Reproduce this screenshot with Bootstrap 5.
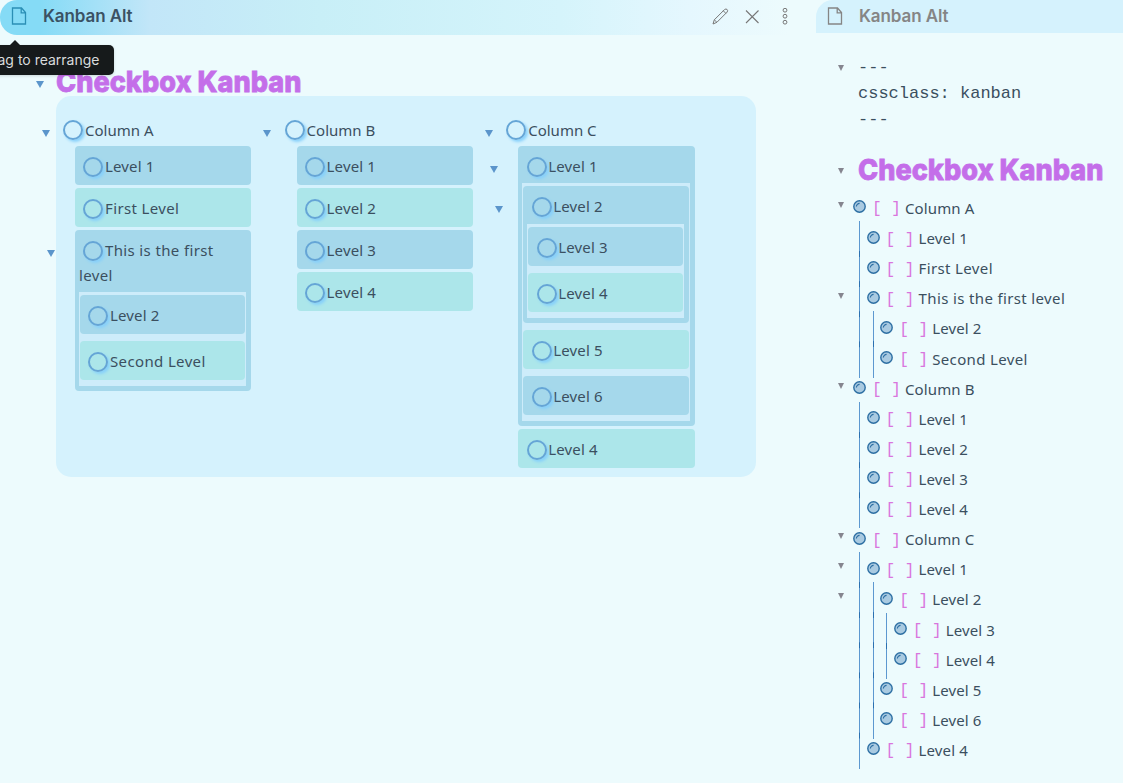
<!DOCTYPE html>
<html lang="en">
<head>
<meta charset="utf-8">
<meta name="viewport" content="width=device-width, initial-scale=1">
<title>Kanban Alt</title>
<link href="https://cdn.jsdelivr.net/npm/bootstrap@5.3.0/dist/css/bootstrap.min.css" rel="stylesheet">
<style>
  body { background: #edfbfd; color: #3b4f5f; font: 15px/25px "Noto Sans", sans-serif; height: 783px; overflow: hidden; }
  ul { list-style: none; margin: 0; padding: 0; }
  .pane-left { width: 816px; }
  .pane-head { height: 35px; font: 600 17px/33px Inter, sans-serif; letter-spacing: -.1px; }
  .head-active { background: linear-gradient(90deg, #85dbf6 0, #85dbf6 40px, #c2e6f8 150px, #c8eff7 320px, #d5f4fb 560px, #e5f7fe 690px, #edfbfd 790px); border-radius: 17px 0 0 17px; color: #3a5264; padding-left: 11px; }
  .head-idle { background: #d5f2fd; border-top-left-radius: 17px; height: 33px; color: #858585; padding-left: 11px; }
  .pane-head svg { fill: none; stroke: currentColor; flex: none; display: block; }
  .file-ico { margin: 7px 16px 0 0; }
  .tools { color: #777; margin-right: 23px; gap: 16px; }
  .tip { position: absolute; top: 45px; left: -30px; width: 143.5px; height: 30px; padding-right: 14px; background: #161a1b; color: #d9dcdd; border-radius: 5px; font: 14px/30px Inter, sans-serif; text-align: right; white-space: nowrap; z-index: 5; box-shadow: 0 1px 3px rgba(0,0,0,.15); }
  .tip::before { content: ""; position: absolute; left: 40px; top: -5px; border: 5px solid transparent; border-top: 0; border-bottom-color: #161a1b; }
  .title { font: 800 29px/36px Inter, sans-serif; color: #c46ee9; -webkit-text-stroke: .8px #c46ee9; white-space: nowrap; margin: 0; }
  .title span { display: inline-block; transform: scaleX(.935); transform-origin: 0 50%; }
  .fold { position: absolute; border: 4.5px solid transparent; border-top: 7px solid #5b95cb; border-bottom: 0; }
  .board { width: 700px; height: 381px; margin-left: 56px; background: #d5f2fd; border-radius: 15px; padding: 22px 0 0 7px; }
  .col-k { width: 188px; margin-right: 33.6px; position: relative; }
  .col-k:last-child { width: 189px; }
  .col-k > .name { line-height: 25px; height: 28px; }
  .col-k > .name .ring { top: -1px; }
  .ring { display: inline-block; width: 20px; height: 20px; border: 2px solid #65a5d6; border-radius: 50%; vertical-align: -5px; margin-right: 2px; box-shadow: 2px 2px 3px #86d0fb; position: relative; }
  .col-k > ul { margin-left: 12px; }
  .col-k > ul > li { margin-bottom: 3px; }
  .col-k li { position: relative; background: #a5d8eb; border-radius: 4px; padding: 8px 5px 6px 4px; letter-spacing: .15px; }
  .wide { letter-spacing: .36px; }
  .col-k li:nth-child(even) { background: #ace6ea; }
  .col-k li > .ring { margin-left: 4px; top: -.5px; }
  .col-k:last-child li > .ring { left: .5px; }
  .col-k li.has-sub { padding-bottom: 5px; }
  .col-k li ul { background: #cdecfa; margin-top: 4px; padding: 3px 1px 6px; }
  .col-k li li { margin-bottom: 7px; }
  .col-k li li:last-child { margin-bottom: 0; }
  .col-k li .lvl2 > ul { margin-top: 5px; }
  .source { font: 17px/26px "Liberation Mono", monospace; margin: 0; padding-left: 42px; color: #3b4f5f; overflow: hidden; }
  .tree { padding-left: 37px; }
  .pane-right .fold { border-top-color: #85858f; border-width: 6px 3.5px 0; left: 22px; }
  .tree ul { position: relative; padding-left: 13.6px; }
  .tree ul::before { content: ""; position: absolute; left: 6px; top: -3px; bottom: -3px; width: 1px;
    background: linear-gradient(#5d98d0,#5d98d0) 0 0/1px 8px no-repeat, linear-gradient(#5d98d0,#5d98d0) 0 100%/1px 7px no-repeat, linear-gradient(#2b70b0 6px,#5d98d0 6px) 0 0/1px 30.11px; }
  .line { height: 30.11px; line-height: 28.4px; display: flex; align-items: flex-start; white-space: pre; letter-spacing: .12px; }
  .line svg { margin: 6.4px 6px 0 0; flex: none; }
  .line code { font: 16px/30px "Liberation Mono", monospace; letter-spacing: 0; color: #d975dd; margin-right: 4.200px; padding-top: .4px; }
</style>
</head>
<body class="d-flex">
<svg width="0" height="0" class="position-absolute">
  <symbol id="file" viewBox="0 0 15 19"><path d="M1 1h9l4 4.5V17H1zM9.7 1v4.8H14" stroke-width="1.3"/></symbol>
  <symbol id="dot" viewBox="0 0 13 13"><circle cx="6.5" cy="6.5" r="5.7" fill="#a9cae1" stroke="#2d6fa3" stroke-width="1.4"/><path d="M3.4 6.6A3.2 3.2 0 0 1 6.6 3.4" fill="none" stroke="#2d6fa3" stroke-width="1.2"/></symbol>
</svg>

<main class="pane-left flex-shrink-0 position-relative">
  <header class="pane-head head-active d-flex">
    <svg class="file-ico" width="16" height="19" style="color:#2b8fb5"><use href="#file"/></svg>
    <span class="flex-grow-1">Kanban Alt</span>
    <div class="tools d-flex pt-2">
      <svg width="17" height="17" viewBox="0 0 17 17"><path d="M1 16l1.3-4.2L12.6 1.5q1.4-1 2.5 0t0 2.6L4.9 14.3zM2.3 11.8l2.6 2.5M11.3 2.8l2.6 2.6"/></svg>
      <svg width="15" height="17" viewBox="0 0 15 17"><path d="M1 2.500l12.500 12.500M13.500 2.500l-12.500 12.500" stroke-width="1.1"/></svg>
      <svg width="17" height="17" viewBox="0 0 17 17"><circle cx="9" cy="2.200" r="1.900"/><circle cx="9" cy="8.200" r="1.900"/><circle cx="9" cy="14.200" r="1.900"/></svg>
    </div>
  </header>
  <div class="tip">Drag to rearrange</div>
  <i class="fold" style="left:35.500px;top:81px"></i>
  <h1 class="title" style="padding:29px 0 0 56px;height:61px"><span>Checkbox Kanban</span></h1>

  <section class="board d-flex">
    <div class="col-k">
      <i class="fold" style="left:-21.500px;top:12px"></i>
      <div class="name"><span class="ring"></span><span>Column A</span></div>
      <ul>
        <li><span class="ring"></span><span>Level 1</span></li>
        <li><span class="ring"></span><span class="wide">First Level</span></li>
        <li class="has-sub"><i class="fold" style="left:-28.500px;top:20px"></i><span class="ring"></span><span class="wide">This is the first<br>level</span>
          <ul>
            <li><span class="ring"></span><span>Level 2</span></li>
            <li><span class="ring"></span><span class="wide">Second Level</span></li>
          </ul>
        </li>
      </ul>
    </div>
    <div class="col-k">
      <i class="fold" style="left:-21.500px;top:12px"></i>
      <div class="name"><span class="ring"></span><span>Column B</span></div>
      <ul>
        <li><span class="ring"></span><span>Level 1</span></li>
        <li><span class="ring"></span><span>Level 2</span></li>
        <li><span class="ring"></span><span>Level 3</span></li>
        <li><span class="ring"></span><span>Level 4</span></li>
      </ul>
    </div>
    <div class="col-k">
      <i class="fold" style="left:-21.500px;top:12px"></i>
      <div class="name"><span class="ring"></span><span>Column C</span></div>
      <ul>
        <li class="has-sub"><i class="fold" style="left:-28.500px;top:20px"></i><span class="ring"></span><span>Level 1</span>
          <ul>
            <li class="has-sub lvl2"><i class="fold" style="left:-28.500px;top:20px"></i><span class="ring"></span><span>Level 2</span>
              <ul>
                <li><span class="ring"></span><span>Level 3</span></li>
                <li><span class="ring"></span><span>Level 4</span></li>
              </ul>
            </li>
            <li><span class="ring"></span><span>Level 5</span></li>
            <li><span class="ring"></span><span>Level 6</span></li>
          </ul>
        </li>
        <li><span class="ring"></span><span>Level 4</span></li>
      </ul>
    </div>
  </section>
</main>

<aside class="pane-right flex-grow-1 position-relative">
  <header class="pane-head head-idle d-flex">
    <svg class="file-ico" width="16" height="19"><use href="#file"/></svg>
    <span>Kanban Alt</span>
  </header>
  <i class="fold" style="top:65px"></i>
  <pre class="source" style="padding-top:22px">---
cssclass: kanban
---</pre>
  <i class="fold" style="top:168px"></i>
  <h2 class="title" style="padding:19px 0 0 42px;height:61px"><span>Checkbox Kanban</span></h2>
  <i class="fold" style="top:202px"></i><i class="fold" style="top:293px"></i><i class="fold" style="top:383px"></i><i class="fold" style="top:533px"></i><i class="fold" style="top:563px"></i><i class="fold" style="top:593px"></i>
  <div class="tree">
    <div class="line"><svg width="13" height="13"><use href="#dot"/></svg><code>[ ]</code><span>Column A</span></div>
    <ul>
      <li class="line"><svg width="13" height="13"><use href="#dot"/></svg><code>[ ]</code><span>Level 1</span></li>
      <li class="line"><svg width="13" height="13"><use href="#dot"/></svg><code>[ ]</code><span class="wide">First Level</span></li>
      <li><div class="line"><svg width="13" height="13"><use href="#dot"/></svg><code>[ ]</code><span class="wide">This is the first level</span></div>
        <ul>
          <li class="line"><svg width="13" height="13"><use href="#dot"/></svg><code>[ ]</code><span>Level 2</span></li>
          <li class="line"><svg width="13" height="13"><use href="#dot"/></svg><code>[ ]</code><span class="wide">Second Level</span></li>
        </ul>
      </li>
    </ul>
    <div class="line"><svg width="13" height="13"><use href="#dot"/></svg><code>[ ]</code><span>Column B</span></div>
    <ul>
      <li class="line"><svg width="13" height="13"><use href="#dot"/></svg><code>[ ]</code><span>Level 1</span></li>
      <li class="line"><svg width="13" height="13"><use href="#dot"/></svg><code>[ ]</code><span>Level 2</span></li>
      <li class="line"><svg width="13" height="13"><use href="#dot"/></svg><code>[ ]</code><span>Level 3</span></li>
      <li class="line"><svg width="13" height="13"><use href="#dot"/></svg><code>[ ]</code><span>Level 4</span></li>
    </ul>
    <div class="line"><svg width="13" height="13"><use href="#dot"/></svg><code>[ ]</code><span>Column C</span></div>
    <ul>
      <li><div class="line"><svg width="13" height="13"><use href="#dot"/></svg><code>[ ]</code><span>Level 1</span></div>
        <ul>
          <li><div class="line"><svg width="13" height="13"><use href="#dot"/></svg><code>[ ]</code><span>Level 2</span></div>
            <ul>
              <li class="line"><svg width="13" height="13"><use href="#dot"/></svg><code>[ ]</code><span>Level 3</span></li>
              <li class="line"><svg width="13" height="13"><use href="#dot"/></svg><code>[ ]</code><span>Level 4</span></li>
            </ul>
          </li>
          <li class="line"><svg width="13" height="13"><use href="#dot"/></svg><code>[ ]</code><span>Level 5</span></li>
          <li class="line"><svg width="13" height="13"><use href="#dot"/></svg><code>[ ]</code><span>Level 6</span></li>
        </ul>
      </li>
      <li class="line"><svg width="13" height="13"><use href="#dot"/></svg><code>[ ]</code><span>Level 4</span></li>
    </ul>
  </div>
</aside>
<script src="https://cdn.jsdelivr.net/npm/bootstrap@5.3.0/dist/js/bootstrap.bundle.min.js"></script>
</body>
</html>
